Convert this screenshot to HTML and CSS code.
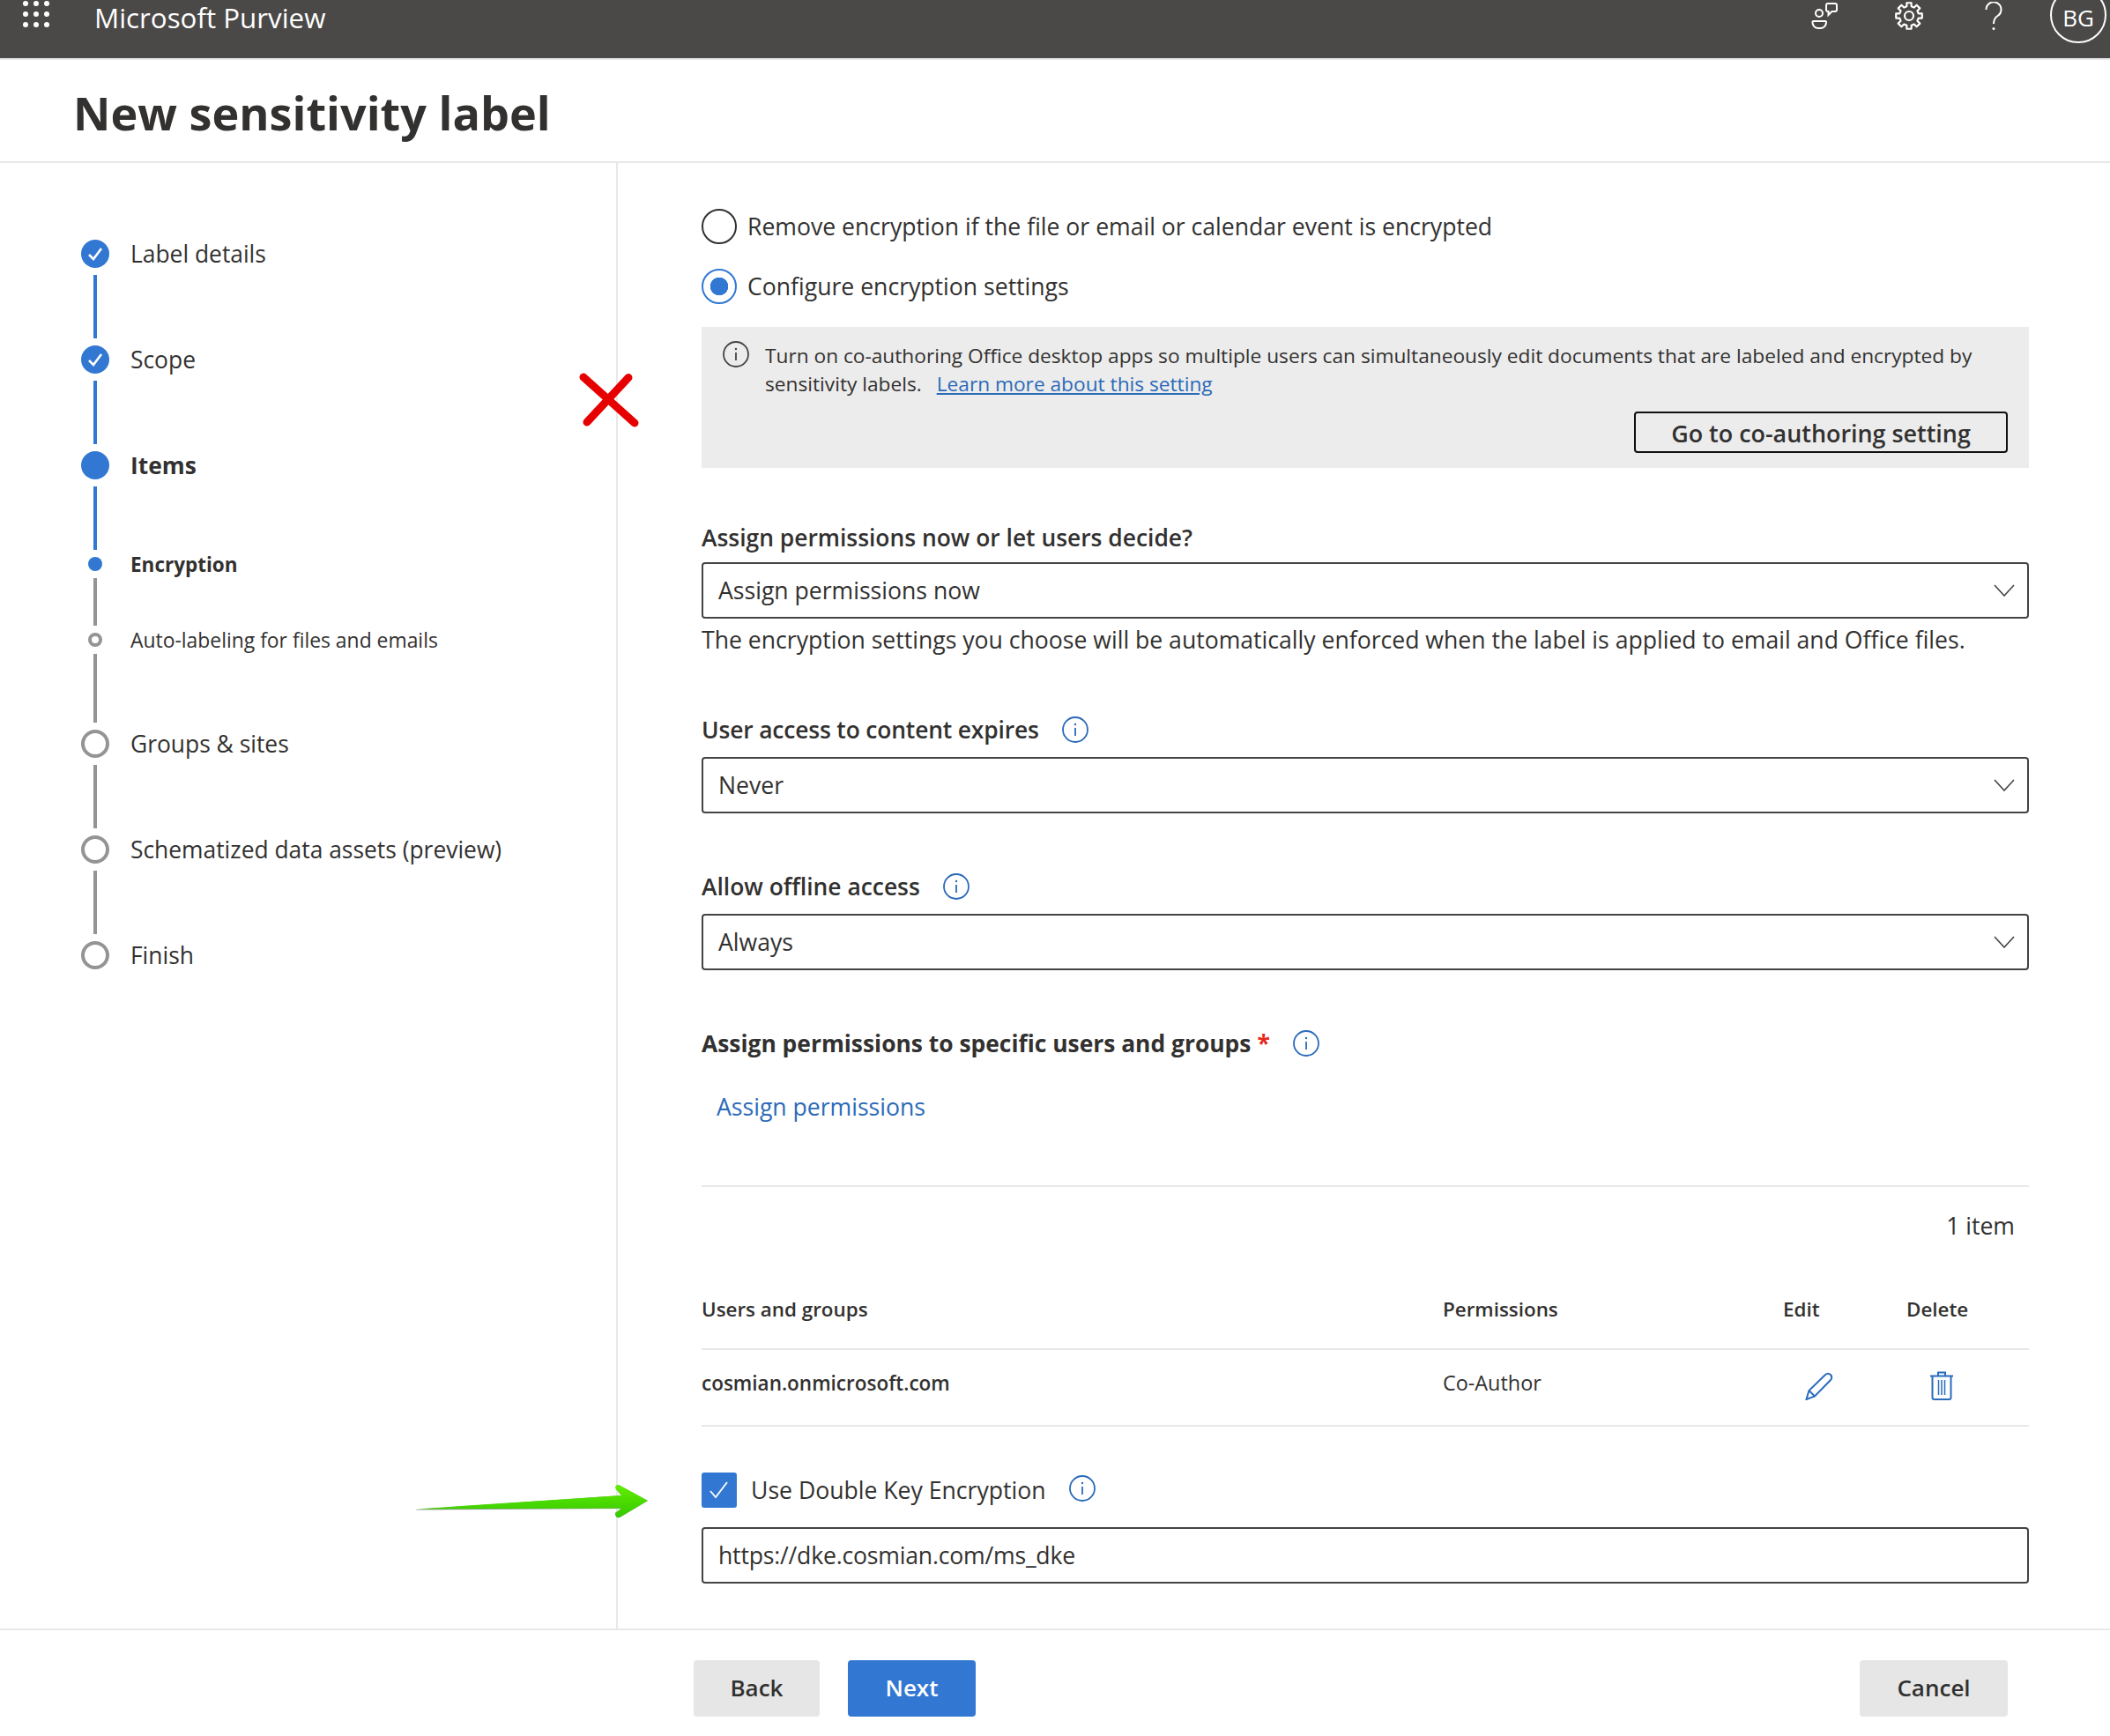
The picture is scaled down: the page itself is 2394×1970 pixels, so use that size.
FILE: index.html
```html
<!DOCTYPE html>
<html lang="en">
<head>
<meta charset="utf-8">
<title>New sensitivity label - Microsoft Purview</title>
<link rel="stylesheet" href="styles.css">
</head>
<body>
<svg class="defs" width="0" height="0" aria-hidden="true">
  <symbol id="info" viewBox="0 0 30 30">
    <circle cx="15" cy="15" r="14" fill="none" stroke="currentColor" stroke-width="1.8"/>
    <path d="M15 13v9" stroke="currentColor" stroke-width="1.8" fill="none"/>
    <circle cx="15" cy="9" r="1.2" fill="currentColor"/>
  </symbol>
  <symbol id="chev" viewBox="0 0 24 14">
    <path d="M1 1l11 12L23 1" fill="none" stroke="#444" stroke-width="1.6"/>
  </symbol>
  <symbol id="tick" viewBox="0 0 32 32">
    <path d="M9 17l5 5 9-12" fill="none" stroke="#fff" stroke-width="2.6"/>
  </symbol>
</svg>

<header class="topbar">
  <div class="waffle"><i></i><i></i><i></i><i></i><i></i><i></i><i></i><i></i><i></i></div>
  <div class="brand">Microsoft Purview</div>
  <div class="topicons">
    <svg class="ti-feedback" width="30" height="30" viewBox="0 0 30 30" fill="none" stroke="#fff" stroke-width="2">
      <circle cx="9" cy="12" r="4"/>
      <path d="M2.5 21H16a1 1 0 0 1 1 1.2A6.5 6.5 0 0 1 11 29H7.5A6.5 6.5 0 0 1 1.5 22.2 1 1 0 0 1 2.500 21Z"/>
      <path d="M19 1H27A2 2 0 0 1 29 3V8A2 2 0 0 1 27 10H23.500L19.500 14V10H19A2 2 0 0 1 17 8V3A2 2 0 0 1 19 1Z"/>
    </svg>
    <svg class="ti-gear" width="32" height="32" viewBox="0 0 32 32" fill="none" stroke="#fff" stroke-width="2.2" stroke-linejoin="round">
      <path d="M13.34 5.33L13.4 1.23H18.6L18.66 5.33L21.67 6.57L24.6 3.71L28.29 7.4L25.43 10.33L26.67 13.34L30.77 13.4V18.6L26.67 18.66L25.43 21.67L28.29 24.6L24.6 28.29L21.67 25.43L18.66 26.67L18.6 30.77H13.4L13.34 26.67L10.33 25.43L7.4 28.29L3.71 24.6L6.57 21.67L5.33 18.66L1.23 18.6V13.4L5.33 13.34L6.57 10.33L3.71 7.4L7.4 3.71L10.33 6.57Z"/>
      <circle cx="16" cy="16" r="5"/>
    </svg>
    <svg class="ti-help" width="20" height="32" viewBox="0 0 20 32" fill="none" stroke="#fff" stroke-width="2">
      <path d="M1.500 9A8.500 8.500 0 1 1 14.500 16C11.500 18 10 20 10 25"/>
      <circle cx="10" cy="30.500" r="1.500" fill="#fff" stroke="none"/>
    </svg>
    <div class="avatar">BG</div>
  </div>
</header>

<div class="titlebar"><h1>New sensitivity label</h1></div>

<div class="wizard">
  <nav class="side">
    <div class="step"><span class="mark done"><svg width="32" height="32"><use href="#tick"/></svg></span><span class="slabel">Label details</span></div>
    <div class="conn blue"></div>
    <div class="step"><span class="mark done"><svg width="32" height="32"><use href="#tick"/></svg></span><span class="slabel">Scope</span></div>
    <div class="conn blue"></div>
    <div class="step"><span class="mark done"></span><span class="slabel strong">Items</span></div>
    <div class="conn blue"></div>
    <div class="step sub"><span class="dot on"></span><span class="slabel small strong">Encryption</span></div>
    <div class="conn gray short"></div>
    <div class="step sub"><span class="dot off"></span><span class="slabel small">Auto-labeling for files and emails</span></div>
    <div class="conn gray tall"></div>
    <div class="step"><span class="mark todo"></span><span class="slabel">Groups &amp; sites</span></div>
    <div class="conn gray"></div>
    <div class="step"><span class="mark todo"></span><span class="slabel">Schematized data assets (preview)</span></div>
    <div class="conn gray"></div>
    <div class="step"><span class="mark todo"></span><span class="slabel">Finish</span></div>
  </nav>

  <main class="content">
    <div class="radio"><span class="rcircle"></span>Remove encryption if the file or email or calendar event is encrypted</div>
    <div class="radio second"><span class="rcircle checked"></span>Configure encryption settings</div>

    <section class="notice">
      <div class="notice-top">
        <svg class="notice-icon" width="30" height="30"><use href="#info"/></svg>
        <div class="notice-text">
          <div>Turn on co-authoring Office desktop apps so multiple users can simultaneously edit documents that are labeled and encrypted by</div>
          <div class="notice-line"><span>sensitivity labels.</span><a href="#" class="notice-link">Learn more about this setting</a></div>
        </div>
      </div>
      <div class="notice-actions"><button class="outline">Go to co-authoring setting</button></div>
    </section>

    <div class="flabel first semi">Assign permissions now or let users decide?</div>
    <div class="select"><span>Assign permissions now</span><svg width="24" height="14"><use href="#chev"/></svg></div>
    <div class="helper">The encryption settings you choose will be automatically enforced when the label is applied to email and Office files.</div>

    <div class="flabel semi spaced tight">User access to content expires<svg class="tip" width="30" height="30"><use href="#info"/></svg></div>
    <div class="select"><span>Never</span><svg width="24" height="14"><use href="#chev"/></svg></div>

    <div class="flabel semi spaced">Allow offline access<svg class="tip" width="30" height="30"><use href="#info"/></svg></div>
    <div class="select"><span>Always</span><svg width="24" height="14"><use href="#chev"/></svg></div>

    <div class="flabel bold spaced">Assign permissions to specific users and groups<span class="req">*</span><svg class="tip" width="30" height="30"><use href="#info"/></svg></div>
    <a href="#" class="assign">Assign permissions</a>

    <hr class="rule">
    <div class="count">1 item</div>

    <div class="trow thead"><span>Users and groups</span><span>Permissions</span><span>Edit</span><span>Delete</span></div>
    <div class="trow tbody">
      <span class="who">cosmian.onmicrosoft.com</span>
      <span>Co-Author</span>
      <span><svg class="edit" width="32" height="32" viewBox="0 0 32 32" fill="none" stroke="#2b6cbd" stroke-width="2"><path d="M1.500 31L4.500 21L23 3Q26 .5 29 3 31.500 6 29 9L11 27.500Z"/><path d="M4.500 21L11 27.500"/></svg></span>
      <span><svg class="trash" width="26" height="33" viewBox="0 0 26 33" fill="none" stroke="#2b6cbd" stroke-width="2"><path d="M0 5.500H26M9 5.500V1.500H17V5.500M2.500 5.500V30A2 2 0 0 0 4.500 32H21.500A2 2 0 0 0 23.500 30V5.500"/><path d="M9.500 10V27M13 10V27M16.500 10V27" stroke-width="1.500"/></svg></span>
    </div>

    <div class="check"><span class="cbox"><svg width="40" height="40" viewBox="0 0 40 40" fill="none" stroke="#fff" stroke-width="1.800"><path d="M10 21l6 7 13-17"/></svg></span><span class="clabel">Use Double Key Encryption</span><svg class="tip check-tip" width="30" height="30"><use href="#info"/></svg></div>
    <div class="select input"><span class="url">https://dke.cosmian.com/ms_dke</span></div>
  </main>
</div>

<footer class="footer">
  <button class="btn back">Back</button>
  <button class="btn next">Next</button>
  <button class="btn cancel">Cancel</button>
</footer>

<svg class="mark-x" width="72" height="68" viewBox="0 0 72 68" fill="none" stroke="#e60000" stroke-width="9" stroke-linecap="round">
  <path d="M7 8L65 60"/>
  <path d="M58 8.500L11 59"/>
</svg>
<svg class="mark-arrow" width="263" height="38" viewBox="0 0 263 38">
  <defs>
    <linearGradient id="g" x1="0" y1="0" x2="0" y2="1">
      <stop offset="0" stop-color="#62ee00"/>
      <stop offset="1" stop-color="#35c800"/>
    </linearGradient>
  </defs>
  <path d="M0 28L233 12L227 5Q225 .5 230 0L263 18L231 37Q226 38 226 32L233 27L0 28.500Z" fill="#8a9a88"/>
  <path d="M0 27.500L233 12L227 5Q225 .5 230 0L263 18L231 37Q226 38 226 32L233 26.500Z" fill="url(#g)"/>
</svg>
</body>
</html>
```

FILE: styles.css
```css
* { box-sizing: border-box; }
html, body { margin: 0; padding: 0; }
body {
  position: relative;
  width: 2394px;
  height: 1970px;
  overflow: hidden;
  background: #fff;
  color: #323130;
  font-family: "Open Sans", "Noto Sans", sans-serif;
  font-size: 26.6px;
}
.defs { position: absolute; }

/* top bar */
.topbar {
  height: 68px;
  background: #4a4947;
  border-bottom: 2px solid #e8e8e8;
  color: #fff;
  display: flex;
  align-items: flex-start;
  overflow: hidden;
}
.waffle {
  margin: 1px 0 0 26px;
  width: 30px;
  display: grid;
  grid-template-columns: repeat(3, 6px);
  grid-auto-rows: 6px;
  gap: 6px;
}
.waffle i { background: #fff; border-radius: 50%; }
.brand { margin-left: 51px; font-size: 31.3px; line-height: 40px; }
.topicons { margin-left: auto; display: flex; align-items: flex-start; }
.ti-feedback { margin-top: 3px; }
.ti-gear { margin: 2px 0 0 65px; }
.ti-help { margin: 2px 0 0 70px; }
.avatar {
  width: 64px;
  height: 64px;
  margin: -15px 4px 0 54px;
  border: 2px solid #fff;
  border-radius: 50%;
  font-size: 26px;
  display: flex;
  align-items: center;
  justify-content: center;
  padding-top: 6px;
}

/* title */
.titlebar {
  height: 117px;
  border-bottom: 2px solid #e8e8e8;
  padding: 29px 0 0 83px;
}
h1 { margin: 0; font-size: 52.2px; line-height: 62px; font-weight: 700; color: #323130; }

/* wizard */
.wizard { display: flex; height: 1663px; }
.side {
  width: 701px;
  flex: none;
  border-right: 2px solid #e8e8e8;
  padding: 87px 0 0 92px;
  font-size: 26.4px;
}
.step { display: flex; align-items: center; height: 32px; }
.step.sub { height: 16px; }
.mark {
  flex: none;
  width: 32px;
  height: 32px;
  border-radius: 50%;
  display: block;
}
.mark svg { display: block; }
.mark.done { background: #3278d2; }
.mark.todo { border: 4px solid #949494; }
.dot {
  flex: none;
  width: 16px;
  height: 16px;
  margin: 0 8px;
  border-radius: 50%;
}
.dot.on { background: #3278d2; }
.dot.off { border: 4px solid #949494; }
.slabel { margin-left: 24px; white-space: nowrap; }
.slabel.strong { font-weight: 700; }
.slabel.small { font-size: 22.9px; }
.slabel.small.strong { font-size: 22.5px; }
.conn { width: 4px; height: 72px; margin: 8px 0 8px 14px; }
.conn.blue { background: #3278d2; }
.conn.gray { background: #949494; }
.conn.short { height: 54px; }
.conn.tall { height: 78px; }

/* main column */
.content { flex: 1; padding: 52px 92px 0 95px; min-width: 0; }
.radio { display: flex; align-items: center; height: 40px; }
.radio.second { margin-top: 28px; }
.rcircle {
  flex: none;
  width: 40px;
  height: 40px;
  margin-right: 12px;
  border: 2px solid #323130;
  border-radius: 50%;
}
.rcircle.checked {
  border-color: #3278d2;
  background: radial-gradient(circle, #3278d2 0 10px, #fff 10.500px);
}

.notice {
  margin-top: 26px;
  height: 160px;
  background: #ececec;
  padding: 16px 24px 0;
}
.notice-top { display: flex; align-items: flex-start; height: 80px; }
.notice-icon { flex: none; color: #444; display: block; margin-right: 18px; }
.notice-text { margin-top: 1px; font-size: 22.7px; line-height: 32px; white-space: nowrap; }
.notice-line { display: flex; }
.notice-link { margin-left: 17px; color: #2a6ab8; text-decoration: underline; }
.notice-actions { display: flex; justify-content: flex-end; }
.outline {
  width: 424px;
  height: 47px;
  padding: 1px 0 0;
  background: transparent;
  border: 2px solid #111;
  border-radius: 4px;
  color: #323130;
  font: 600 26.9px "Open Sans", "Noto Sans", sans-serif;
}

.flabel { display: flex; align-items: center; height: 36px; margin-bottom: 12px; padding-bottom: 3px; font-size: 26.4px; }
.flabel.first { margin-top: 62px; margin-bottom: 9px; }
.flabel.spaced { margin-top: 66px; }
.flabel.semi { font-weight: 600; }
.flabel.bold { font-weight: 700; }
.flabel.tight { letter-spacing: -0.15px; }
.tip { flex: none; color: #2a6ab8; margin-left: 26px; }
.req { color: #e8281c; margin-left: 7px; }

.select {
  height: 64px;
  border: 2.500px solid #444;
  border-radius: 4px;
  padding: 0 14px 0 17px;
  display: flex;
  align-items: center;
  justify-content: space-between;
}
.url { letter-spacing: -0.2px; }
.helper { margin-top: 7px; height: 36px; line-height: 35px; white-space: nowrap; }

.assign {
  display: block;
  margin: 36px 0 0 17px;
  height: 36px;
  line-height: 34px;
  color: #2a6ab8;
  text-decoration: none;
}
.rule { margin: 70px 0 0; height: 2px; border: 0; background: #e8e8e8; }
.count { margin-top: 27px; height: 36px; line-height: 34px; text-align: right; padding-right: 16px; }

.trow {
  display: grid;
  grid-template-columns: 841px 386px 140px 1fr;
  align-items: center;
  font-size: 23.4px;
}
.thead {
  margin-top: 59px;
  height: 63px;
  padding-bottom: 28px;
  border-bottom: 2px solid #e8e8e8;
  font-weight: 600;
  font-size: 22.4px;
}
.tbody {
  height: 87px;
  padding-bottom: 11px;
  border-bottom: 2px solid #e8e8e8;
}
.tbody svg { display: block; }
.who { font-weight: 600; font-size: 22.5px; }
.edit { margin: 7px 0 0 25px; }
.trash { margin: 7px 0 0 27px; }

.check { margin-top: 52px; display: flex; align-items: center; height: 40px; }
.cbox {
  flex: none;
  width: 40px;
  height: 40px;
  border-radius: 3px;
  background: #3278d2;
}
.cbox svg { display: block; }
.clabel { margin-left: 16px; }
.check-tip { margin-top: -4px; }
.input { margin-top: 22px; }

/* footer */
.footer {
  height: 122px;
  border-top: 2px solid #e8e8e8;
  padding: 34px 116px 0 787px;
  display: flex;
  align-items: flex-start;
}
.btn {
  height: 64px;
  border: 0;
  border-radius: 4px;
  padding: 0 0 2px;
  background: #e6e6e6;
  color: #323130;
  font: 600 26px "Open Sans", "Noto Sans", sans-serif;
}
.back { width: 143px; }
.next { width: 145px; margin-left: 32px; background: #3278d2; color: #fff; }
.cancel { width: 168px; margin-left: auto; }

/* annotations drawn over the screenshot */
.mark-x { position: absolute; left: 655px; top: 420px; }
.mark-arrow { position: absolute; left: 472px; top: 1685px; }
```
